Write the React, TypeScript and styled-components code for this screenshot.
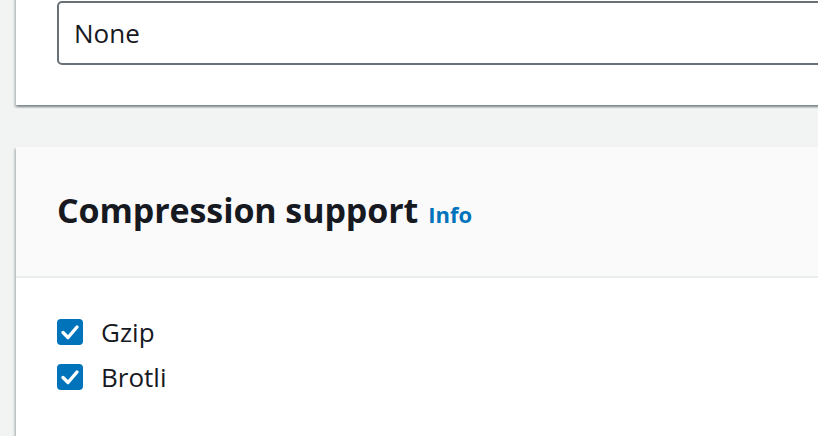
import React from "react";
import styled, { createGlobalStyle } from "styled-components";

const Global = createGlobalStyle`
  html, body { margin: 0; padding: 0; overflow: hidden; background: #f2f3f3; }
  body { font-family: "Open Sans", "Noto Sans", sans-serif; color: #16191f; }
`;

const Page = styled.div`
  width: 1400px;
  margin-top: -40px;
  padding-left: 16px;
  display: flex;
  flex-direction: column;
  gap: 42px;
`;

const Card = styled.section`
  background: #ffffff;
  box-shadow: 0 2px 2px 0 rgba(0, 28, 36, 0.3), 2px 2px 2px 0 rgba(0, 28, 36, 0.15),
    -2px 2px 2px 0 rgba(0, 28, 36, 0.15);
`;

const CardBody = styled.div<{ $top: number; $bottom: number }>`
  padding: ${(p) => p.$top}px 0 ${(p) => p.$bottom}px 41px;
`;

const Input = styled.div`
  box-sizing: border-box;
  height: 64px;
  border: 2px solid #687078;
  border-radius: 5px;
  display: flex;
  align-items: center;
  padding-left: 15px;
  padding-bottom: 1px;
  font-size: 26px;
  color: #16191f;
  background: #fff;
`;

const Header = styled.header`
  background: #fafafa;
  border-bottom: 2px solid #eaeded;
  padding: 39px 41px 41px;
  display: flex;
  align-items: baseline;
  gap: 10px;
`;

const Title = styled.h2`
  margin: 0;
  font-size: 34px;
  line-height: 49px;
  font-weight: 700;
  letter-spacing: -0.1px;
  color: #16191f;
`;

const InfoLink = styled.a`
  font-size: 22px;
  font-weight: 700;
  color: #0073bb;
  text-decoration: none;
`;

const List = styled.div`
  display: flex;
  flex-direction: column;
  gap: 11px;
  min-height: 200px;
`;

const Row = styled.label`
  height: 34px;
  display: flex;
  align-items: center;
  gap: 18px;
  font-size: 26px;
  color: #16191f;
`;

const Box = styled.span`
  width: 26px;
  height: 26px;
  border-radius: 4px;
  background: #0073bb;
  display: inline-flex;
  align-items: center;
  justify-content: center;
`;

const Check = () => (
  <Box>
    <svg width="26" height="26" viewBox="0 0 26 26">
      <polyline
        points="6,13.5 11,18.5 20,8"
        fill="none"
        stroke="#fff"
        strokeWidth="3.4"
        strokeLinecap="round"
        strokeLinejoin="round"
      />
    </svg>
  </Box>
);

export default function App() {
  return (
    <>
      <Global />
      <Page>
        <Card>
          <CardBody $top={41} $bottom={40}>
            <Input>None</Input>
          </CardBody>
        </Card>
        <Card>
          <Header>
            <Title>Compression support</Title>
            <InfoLink href="#">Info</InfoLink>
          </Header>
          <CardBody $top={37} $bottom={40}>
            <List>
              <Row>
                <Check />
                Gzip
              </Row>
              <Row>
                <Check />
                Brotli
              </Row>
            </List>
          </CardBody>
        </Card>
      </Page>
    </>
  );
}
